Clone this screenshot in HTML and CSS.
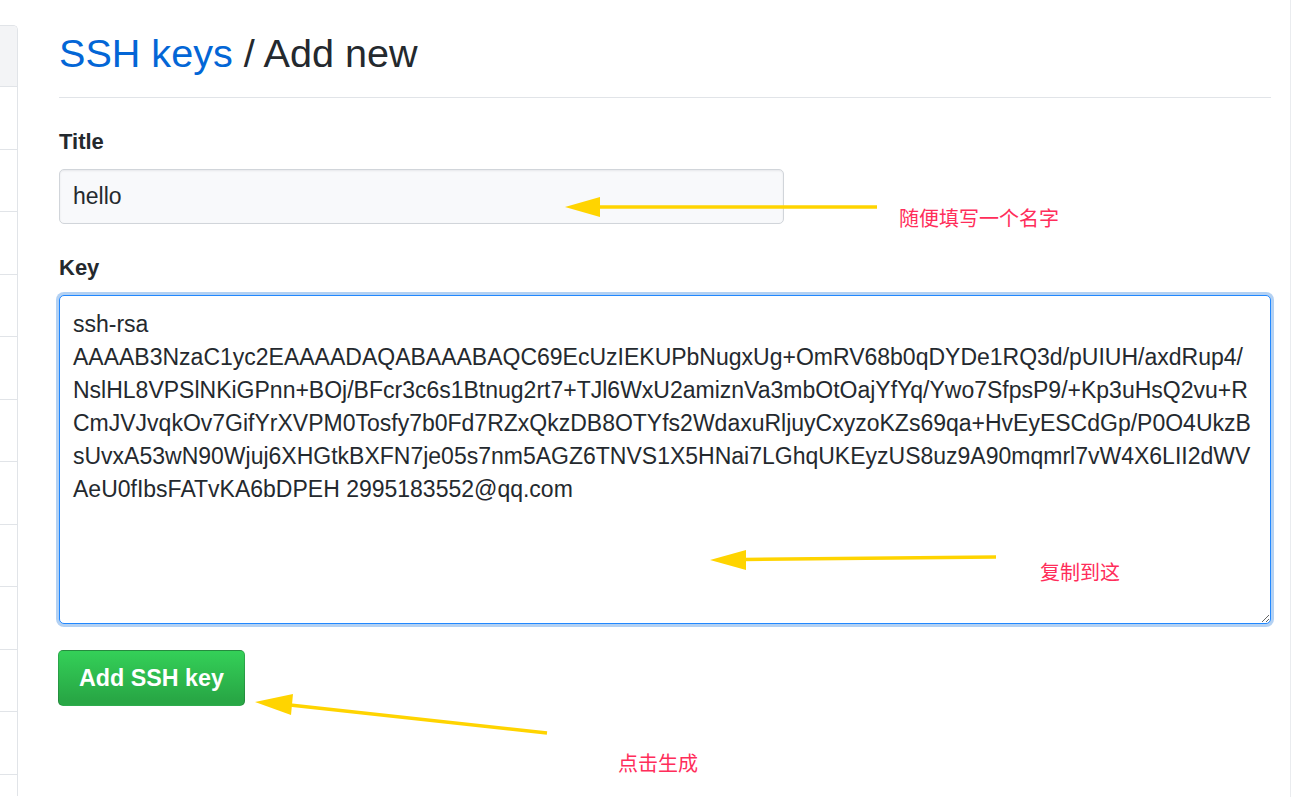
FILE: index.html
```html
<!DOCTYPE html>
<html lang="zh">
<head>
<meta charset="utf-8">
<title>SSH keys / Add new</title>
<link rel="stylesheet" href="styles.css">
</head>
<body>
<div class="page">
  <nav class="sidebar">
    <div class="menu">
      <div class="menu-item head"></div>
      <div class="menu-item"></div>
      <div class="menu-item"></div>
      <div class="menu-item"></div>
      <div class="menu-item"></div>
      <div class="menu-item"></div>
      <div class="menu-item"></div>
      <div class="menu-item"></div>
      <div class="menu-item"></div>
      <div class="menu-item"></div>
      <div class="menu-item"></div>
      <div class="menu-item"></div>
      <div class="menu-item last"></div>
    </div>
  </nav>
  <main class="main">
    <div class="subhead">
      <h2 class="subhead-heading"><a class="crumb" href="#">SSH keys</a> / Add new</h2>
    </div>
    <form class="form">
      <div class="form-group">
        <label class="label" for="title">Title</label>
        <input class="input title-input" id="title" type="text" value="hello">
      </div>
      <div class="form-group">
        <label class="label" for="key">Key</label>
        <textarea class="input key-input" id="key" wrap="off" spellcheck="false">ssh-rsa
AAAAB3NzaC1yc2EAAAADAQABAAABAQC69EcUzIEKUPbNugxUg+OmRV68b0qDYDe1RQ3d/pUIUH/axdRup4/
NslHL8VPSlNKiGPnn+BOj/BFcr3c6s1Btnug2rt7+TJl6WxU2amiznVa3mbOtOajYfYq/Ywo7SfpsP9/+Kp3uHsQ2vu+R
CmJVJvqkOv7GifYrXVPM0Tosfy7b0Fd7RZxQkzDB8OTYfs2WdaxuRljuyCxyzoKZs69qa+HvEyESCdGp/P0O4UkzB
sUvxA53wN90Wjuj6XHGtkBXFN7je05s7nm5AGZ6TNVS1X5HNai7LGhqUKEyzUS8uz9A90mqmrl7vW4X6LII2dWV
AeU0fIbsFATvKA6bDPEH 2995183552@qq.com</textarea>
      </div>
      <button class="btn-primary" type="button">Add SSH key</button>
    </form>
  </main>
  <div class="edge"></div>
</div>

<svg class="annotations" width="1292" height="797" viewBox="0 0 1292 797" aria-hidden="true">
  <g fill="#ffd400" stroke="#ffd400">
    <line x1="596" y1="207" x2="877" y2="207" stroke-width="3.5"/>
    <polygon points="565,207 600,197 600,217" stroke="none"/>
    <line x1="744" y1="559.5" x2="996" y2="557" stroke-width="3.5"/>
    <polygon points="710,560 746,550 746,570" stroke="none"/>
    <line x1="290" y1="705" x2="547" y2="733" stroke-width="3.5"/>
    <polygon points="255,702 293,694 291,715" stroke="none"/>
  </g>
</svg>
<span class="note note-1">随便填写一个名字</span>
<span class="note note-2">复制到这</span>
<span class="note note-3">点击生成</span>
</body>
</html>
```

FILE: styles.css
```css
* { box-sizing: border-box; }

html, body {
  margin: 0;
  padding: 0;
  background: #fff;
}

body {
  font-family: "Liberation Sans", Arial, "Noto Sans CJK SC", sans-serif;
  color: #24292e;
  width: 1292px;
  height: 797px;
  overflow: hidden;
  position: relative;
}

.page {
  display: flex;
  height: 797px;
  overflow: hidden;
}

.sidebar {
  width: 18px;
  flex: none;
  padding-top: 25px;
  height: 797px;
  overflow: hidden;
}

.menu {
  border: 1px solid #e1e4e8;
  border-left: none;
  border-bottom: none;
  border-radius: 0 5px 0 0;
  overflow: hidden;
}

.menu-item {
  height: 62.5px;
  border-bottom: 1px solid #e1e4e8;
}

.menu-item.head {
  height: 61px;
  background: #f3f4f6;
}

.menu-item.last {
  height: 21px;
  border-bottom: none;
}

.main {
  width: 1212px;
  margin-left: 41px;
  flex: none;
}

.edge {
  flex: none;
  width: 1px;
  margin-left: 19px;
  background: #eaecef;
}

.subhead {
  padding-top: 30px;
  padding-bottom: 21px;
  border-bottom: 1px solid #e1e4e8;
  margin-bottom: 29px;
}

.subhead-heading {
  margin: 0;
  font-size: 39.6px;
  font-weight: 400;
  line-height: 46px;
  color: #24292e;
}

.crumb {
  color: #0366d6;
  text-decoration: none;
}

.form-group {
  display: flex;
  flex-direction: column;
}

.label {
  font-size: 22px;
  font-weight: 700;
  line-height: 30px;
  margin-bottom: 12px;
}

.input {
  font-family: "Liberation Sans", Arial, sans-serif;
  font-size: 23px;
  color: #24292e;
  border: 1px solid #d1d5da;
  border-radius: 5px;
  outline: none;
}

.title-input {
  width: 725px;
  height: 55px;
  padding: 0 13px;
  background: #f8f9fb;
  margin-bottom: 29px;
  box-shadow: inset 0 1px 2px rgba(27, 31, 35, 0.075);
}

.key-input {
  width: 1212px;
  height: 329px;
  padding: 12px 13px;
  line-height: 33px;
  background: #fff;
  border-color: #2188ff;
  box-shadow: 0 0 0 3px rgba(3, 102, 214, 0.3);
  resize: vertical;
  overflow: hidden;
  white-space: pre;
  margin-bottom: 26px;
}

.btn-primary {
  display: block;
  width: 187px;
  height: 56px;
  padding: 0;
  font-family: "Liberation Sans", Arial, sans-serif;
  font-size: 23.3px;
  font-weight: 700;
  color: #fff;
  background: linear-gradient(180deg, #34d058 0%, #28a745 90%);
  border: 1px solid rgba(27, 31, 35, 0.2);
  border-radius: 5px;
  margin-left: -1px;
}

.annotations {
  position: absolute;
  left: 0;
  top: 0;
  pointer-events: none;
}

.note {
  position: absolute;
  font-family: "Noto Sans CJK SC", sans-serif;
  font-size: 20px;
  line-height: 22px;
  color: #ff2d5a;
  white-space: nowrap;
}

.note-1 { left: 899px; top: 207px; }
.note-2 { left: 1040px; top: 561px; }
.note-3 { left: 618px; top: 752px; }
```
